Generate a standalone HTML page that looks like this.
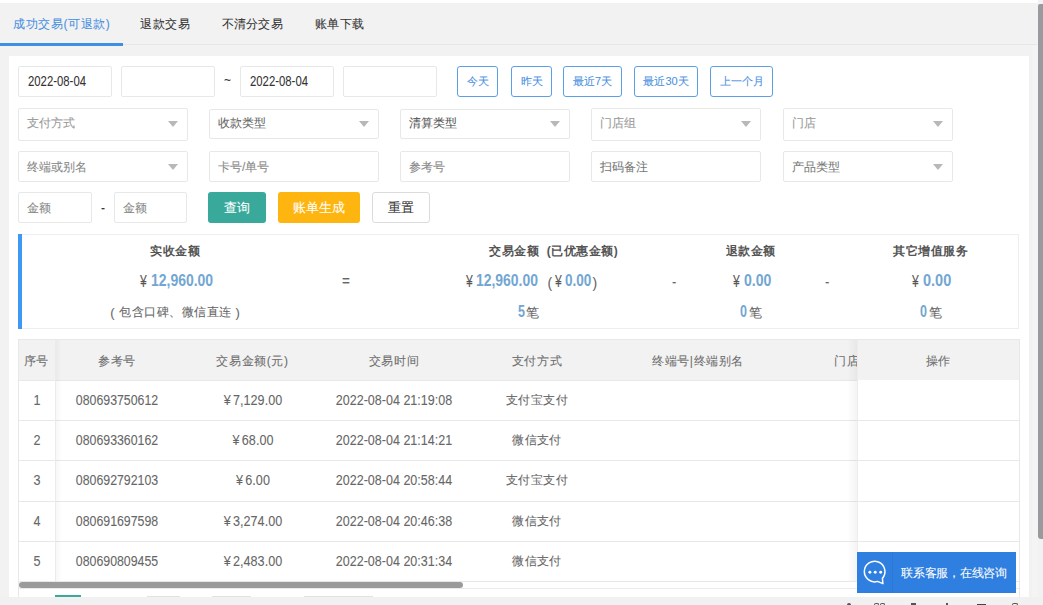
<!DOCTYPE html>
<html><head><meta charset="utf-8">
<style>
*{box-sizing:border-box;margin:0;padding:0}
html,body{width:1043px;height:605px;overflow:hidden;background:#f2f2f2;font-family:"Liberation Sans",sans-serif;color:#333;position:relative}
.a{position:absolute}
.t{white-space:nowrap;-webkit-text-stroke:0.08px}
.b{-webkit-text-stroke:0}
</style></head><body>
<div class="a" style="left:0px;top:0px;width:1038px;height:3px;background:#fff"></div>
<div class="a" style="left:0px;top:44px;width:1037px;height:1px;background:#e6e6e6"></div>
<div class="a t" style="left:13px;top:15.8px;line-height:16px;font-size:12px;color:#4a90e2;font-weight:normal;letter-spacing:0.6px;">成功交易(可退款)</div>
<div class="a t" style="left:140px;top:15.8px;line-height:16px;font-size:12px;color:#333;font-weight:normal;letter-spacing:0.5px;">退款交易</div>
<div class="a t" style="left:221.5px;top:15.8px;line-height:16px;font-size:12px;color:#333;font-weight:normal;letter-spacing:0.3px;">不清分交易</div>
<div class="a t" style="left:314.5px;top:15.8px;line-height:16px;font-size:12px;color:#333;font-weight:normal;letter-spacing:0.5px;">账单下载</div>
<div class="a" style="left:0px;top:43.3px;width:122.5px;height:2.4000000000000057px;background:#3c8fe3"></div>
<div class="a" style="left:9px;top:56px;width:1020px;height:541px;background:#fff"></div>
<div class="a" style="left:1032px;top:45px;width:6px;height:552px;background:#f4f4f4"></div>
<div class="a" style="left:1038px;top:4px;width:5px;height:534.5px;background:#999a9d;border-radius:2px 0 0 3px"></div>
<div class="a" style="left:0px;top:597px;width:1043px;height:8px;background:#f1f1f1"></div>
<div class="a" style="left:18px;top:66px;width:94px;height:31px;border:1px solid #e8e8e8;border-radius:2px;background:#fff"></div>
<div class="a t" style="left:28px;top:72.0px;line-height:18px;font-size:14px;color:#333;font-weight:normal;letter-spacing:0px;transform:scale(0.81,1);transform-origin:0 50%;">2022-08-04</div>
<div class="a" style="left:121px;top:66px;width:94px;height:31px;border:1px solid #e8e8e8;border-radius:2px;background:#fff"></div>
<div class="a t" style="left:224px;top:71.5px;line-height:16px;font-size:12px;color:#333;font-weight:normal;letter-spacing:0px;">~</div>
<div class="a" style="left:240px;top:66px;width:94px;height:31px;border:1px solid #e8e8e8;border-radius:2px;background:#fff"></div>
<div class="a t" style="left:250px;top:72.0px;line-height:18px;font-size:14px;color:#333;font-weight:normal;letter-spacing:0px;transform:scale(0.81,1);transform-origin:0 50%;">2022-08-04</div>
<div class="a" style="left:343px;top:66px;width:94px;height:31px;border:1px solid #e8e8e8;border-radius:2px;background:#fff"></div>
<div class="a" style="left:457px;top:66px;width:41px;height:31px;border:1px solid #5b9fe6;border-radius:3px;background:#fff"></div>
<div class="a t" style="left:177.5px;width:600px;text-align:center;top:74.0px;line-height:15px;font-size:11px;color:#4a90e2;font-weight:normal;letter-spacing:0px;">今天</div>
<div class="a" style="left:511px;top:66px;width:41px;height:31px;border:1px solid #5b9fe6;border-radius:3px;background:#fff"></div>
<div class="a t" style="left:231.5px;width:600px;text-align:center;top:74.0px;line-height:15px;font-size:11px;color:#4a90e2;font-weight:normal;letter-spacing:0px;">昨天</div>
<div class="a" style="left:563px;top:66px;width:59px;height:31px;border:1px solid #5b9fe6;border-radius:3px;background:#fff"></div>
<div class="a t" style="left:292.5px;width:600px;text-align:center;top:74.0px;line-height:15px;font-size:11px;color:#4a90e2;font-weight:normal;letter-spacing:0px;">最近7天</div>
<div class="a" style="left:634px;top:66px;width:64px;height:31px;border:1px solid #5b9fe6;border-radius:3px;background:#fff"></div>
<div class="a t" style="left:366.0px;width:600px;text-align:center;top:74.0px;line-height:15px;font-size:11px;color:#4a90e2;font-weight:normal;letter-spacing:0px;">最近30天</div>
<div class="a" style="left:710px;top:66px;width:63px;height:31px;border:1px solid #5b9fe6;border-radius:3px;background:#fff"></div>
<div class="a t" style="left:441.5px;width:600px;text-align:center;top:74.0px;line-height:15px;font-size:11px;color:#4a90e2;font-weight:normal;letter-spacing:0px;">上一个月</div>
<div class="a" style="left:18px;top:107.5px;width:170px;height:33.0px;border:1px solid #e8e8e8;border-radius:2px;background:#fff"></div>
<div class="a t" style="left:27px;top:115.2px;line-height:16px;font-size:12px;color:#999;font-weight:normal;letter-spacing:0px;">支付方式</div>
<div class="a" style="left:167.6px;top:121.0px;width:0;height:0;border-left:5px solid transparent;border-right:5px solid transparent;border-top:6px solid #b8b8b8"></div>
<div class="a" style="left:209px;top:108.5px;width:170px;height:30.5px;border:1px solid #e8e8e8;border-radius:2px;background:#fff"></div>
<div class="a t" style="left:218px;top:114.95px;line-height:16px;font-size:12px;color:#666;font-weight:normal;letter-spacing:0px;">收款类型</div>
<div class="a" style="left:358.6px;top:120.75px;width:0;height:0;border-left:5px solid transparent;border-right:5px solid transparent;border-top:6px solid #b8b8b8"></div>
<div class="a" style="left:400px;top:108.5px;width:170px;height:30.5px;border:1px solid #e8e8e8;border-radius:2px;background:#fff"></div>
<div class="a t" style="left:409px;top:114.95px;line-height:16px;font-size:12px;color:#555;font-weight:normal;letter-spacing:0px;">清算类型</div>
<div class="a" style="left:549.6px;top:120.75px;width:0;height:0;border-left:5px solid transparent;border-right:5px solid transparent;border-top:6px solid #b8b8b8"></div>
<div class="a" style="left:591px;top:108px;width:170px;height:32.5px;border:1px solid #e8e8e8;border-radius:2px;background:#fff"></div>
<div class="a t" style="left:600px;top:115.45px;line-height:16px;font-size:12px;color:#999;font-weight:normal;letter-spacing:0px;">门店组</div>
<div class="a" style="left:740.6px;top:121.25px;width:0;height:0;border-left:5px solid transparent;border-right:5px solid transparent;border-top:6px solid #b8b8b8"></div>
<div class="a" style="left:783px;top:108px;width:170px;height:32.5px;border:1px solid #e8e8e8;border-radius:2px;background:#fff"></div>
<div class="a t" style="left:792px;top:115.45px;line-height:16px;font-size:12px;color:#999;font-weight:normal;letter-spacing:0px;">门店</div>
<div class="a" style="left:932.6px;top:121.25px;width:0;height:0;border-left:5px solid transparent;border-right:5px solid transparent;border-top:6px solid #b8b8b8"></div>
<div class="a" style="left:18px;top:151px;width:170px;height:31px;border:1px solid #e8e8e8;border-radius:2px;background:#fff"></div>
<div class="a t" style="left:27px;top:158.5px;line-height:16px;font-size:12px;color:#888;font-weight:normal;letter-spacing:0px;">终端或别名</div>
<div class="a" style="left:167.6px;top:163.5px;width:0;height:0;border-left:5px solid transparent;border-right:5px solid transparent;border-top:6px solid #b8b8b8"></div>
<div class="a" style="left:209px;top:151px;width:170px;height:31px;border:1px solid #e8e8e8;border-radius:2px;background:#fff"></div>
<div class="a t" style="left:218px;top:158.5px;line-height:16px;font-size:12px;color:#888;font-weight:normal;letter-spacing:0px;">卡号/单号</div>
<div class="a" style="left:400px;top:151px;width:170px;height:31px;border:1px solid #e8e8e8;border-radius:2px;background:#fff"></div>
<div class="a t" style="left:409px;top:158.5px;line-height:16px;font-size:12px;color:#888;font-weight:normal;letter-spacing:0px;">参考号</div>
<div class="a" style="left:591px;top:151px;width:170px;height:31px;border:1px solid #e8e8e8;border-radius:2px;background:#fff"></div>
<div class="a t" style="left:600px;top:158.5px;line-height:16px;font-size:12px;color:#777;font-weight:normal;letter-spacing:0px;">扫码备注</div>
<div class="a" style="left:783px;top:151px;width:170px;height:31px;border:1px solid #e8e8e8;border-radius:2px;background:#fff"></div>
<div class="a t" style="left:792px;top:158.5px;line-height:16px;font-size:12px;color:#777;font-weight:normal;letter-spacing:0px;">产品类型</div>
<div class="a" style="left:932.6px;top:163.5px;width:0;height:0;border-left:5px solid transparent;border-right:5px solid transparent;border-top:6px solid #b8b8b8"></div>
<div class="a" style="left:18px;top:192px;width:74px;height:31px;border:1px solid #e8e8e8;border-radius:2px;background:#fff"></div>
<div class="a t" style="left:27px;top:199.5px;line-height:16px;font-size:12px;color:#888;font-weight:normal;letter-spacing:0px;">金额</div>
<div class="a t" style="left:101px;top:199.5px;line-height:16px;font-size:12px;color:#333;font-weight:normal;letter-spacing:0px;">-</div>
<div class="a" style="left:114px;top:192px;width:73px;height:31px;border:1px solid #e8e8e8;border-radius:2px;background:#fff"></div>
<div class="a t" style="left:123px;top:199.5px;line-height:16px;font-size:12px;color:#888;font-weight:normal;letter-spacing:0px;">金额</div>
<div class="a" style="left:208px;top:192px;width:58px;height:31px;background:#38a99b;border-radius:3px"></div>
<div class="a t" style="left:-63px;width:600px;text-align:center;top:200.25px;line-height:16.5px;font-size:12.5px;color:#fff;font-weight:normal;letter-spacing:0px;">查询</div>
<div class="a" style="left:278px;top:192px;width:82px;height:31px;background:#ffb50f;border-radius:3px"></div>
<div class="a t" style="left:19px;width:600px;text-align:center;top:200.25px;line-height:16.5px;font-size:12.5px;color:#fff;font-weight:normal;letter-spacing:0px;">账单生成</div>
<div class="a" style="left:372px;top:192px;width:58px;height:31px;border:1px solid #dcdcdc;border-radius:3px;background:#fff"></div>
<div class="a t" style="left:101px;width:600px;text-align:center;top:200.25px;line-height:16.5px;font-size:12.5px;color:#333;font-weight:normal;letter-spacing:0px;">重置</div>
<div class="a" style="left:18px;top:234px;width:1001px;height:95px;border:1px solid #eee;border-left:none;background:#fff"></div>
<div class="a" style="left:18px;top:234px;width:4px;height:95px;background:#3f97f6"></div>
<div class="a t b" style="left:-125px;width:600px;text-align:center;top:242.5px;line-height:16px;font-size:12px;color:#555;font-weight:bold;letter-spacing:0.5px;">实收金额</div>
<div class="a t" style="left:139.79999999999998px;top:271.5px;line-height:20px;font-size:16px;color:#555;font-weight:normal;letter-spacing:0px;transform:scale(0.76,1);transform-origin:0 50%;">¥</div>
<div class="a t b" style="left:150.6px;top:271.0px;line-height:20px;font-size:16px;color:#72a6d2;font-weight:bold;letter-spacing:0px;transform:scale(0.872,1);transform-origin:0 50%;">12,960.00</div>
<div class="a t" style="left:110.3px;top:304.0px;line-height:17px;font-size:13px;color:#666;font-weight:normal;letter-spacing:0px;">(</div>
<div class="a t" style="left:119px;top:304.0px;line-height:16px;font-size:12px;color:#666;font-weight:normal;letter-spacing:0.5px;">包含口碑、微信直连</div>
<div class="a t" style="left:235.5px;top:304.0px;line-height:17px;font-size:13px;color:#666;font-weight:normal;letter-spacing:0px;">)</div>
<div class="a t" style="left:341.5px;top:270.5px;line-height:19px;font-size:15px;color:#666;font-weight:normal;letter-spacing:0px;transform:scale(0.9,1);transform-origin:0 50%;">=</div>
<div class="a t b" style="left:489px;top:242.5px;line-height:16px;font-size:12px;color:#555;font-weight:bold;letter-spacing:0.5px;">交易金额&nbsp;&nbsp;(已优惠金额)</div>
<div class="a t" style="left:465.59999999999997px;top:271.5px;line-height:20px;font-size:16px;color:#555;font-weight:normal;letter-spacing:0px;transform:scale(0.76,1);transform-origin:0 50%;">¥</div>
<div class="a t b" style="left:476.1px;top:271.0px;line-height:20px;font-size:16px;color:#72a6d2;font-weight:bold;letter-spacing:0px;transform:scale(0.87,1);transform-origin:0 50%;">12,960.00</div>
<div class="a t" style="left:547.5px;top:273.5px;line-height:18px;font-size:14px;color:#666;font-weight:normal;letter-spacing:0px;">(</div>
<div class="a t" style="left:554.8000000000001px;top:271.5px;line-height:20px;font-size:16px;color:#555;font-weight:normal;letter-spacing:0px;transform:scale(0.76,1);transform-origin:0 50%;">¥</div>
<div class="a t b" style="left:564.7px;top:271.0px;line-height:20px;font-size:16px;color:#72a6d2;font-weight:bold;letter-spacing:0px;transform:scale(0.845,1);transform-origin:0 50%;">0.00</div>
<div class="a t" style="left:592.5px;top:273.5px;line-height:18px;font-size:14px;color:#666;font-weight:normal;letter-spacing:0px;">)</div>
<div class="a t b" style="left:518.3px;top:301.5px;line-height:20px;font-size:16px;color:#72a6d2;font-weight:bold;letter-spacing:0px;transform:scale(0.78,1);transform-origin:0 50%;">5</div>
<div class="a t" style="left:526.3px;top:304.0px;line-height:17px;font-size:13px;color:#666;font-weight:normal;letter-spacing:0px;">笔</div>
<div class="a t" style="left:672px;top:272.5px;line-height:17px;font-size:13px;color:#666;font-weight:normal;letter-spacing:0px;">-</div>
<div class="a t b" style="left:450.5px;width:600px;text-align:center;top:242.5px;line-height:16px;font-size:12px;color:#555;font-weight:bold;letter-spacing:0.5px;">退款金额</div>
<div class="a t" style="left:733.2px;top:271.5px;line-height:20px;font-size:16px;color:#555;font-weight:normal;letter-spacing:0px;transform:scale(0.76,1);transform-origin:0 50%;">¥</div>
<div class="a t b" style="left:743.5px;top:271.0px;line-height:20px;font-size:16px;color:#72a6d2;font-weight:bold;letter-spacing:0px;transform:scale(0.877,1);transform-origin:0 50%;">0.00</div>
<div class="a t b" style="left:740px;top:301.5px;line-height:20px;font-size:16px;color:#72a6d2;font-weight:bold;letter-spacing:0px;transform:scale(0.78,1);transform-origin:0 50%;">0</div>
<div class="a t" style="left:748.5px;top:304.0px;line-height:17px;font-size:13px;color:#666;font-weight:normal;letter-spacing:0px;">笔</div>
<div class="a t" style="left:825px;top:272.5px;line-height:17px;font-size:13px;color:#666;font-weight:normal;letter-spacing:0px;">-</div>
<div class="a t b" style="left:630.5px;width:600px;text-align:center;top:242.5px;line-height:16px;font-size:12px;color:#555;font-weight:bold;letter-spacing:0.5px;">其它增值服务</div>
<div class="a t" style="left:912.2px;top:271.5px;line-height:20px;font-size:16px;color:#555;font-weight:normal;letter-spacing:0px;transform:scale(0.76,1);transform-origin:0 50%;">¥</div>
<div class="a t b" style="left:922.5px;top:271.0px;line-height:20px;font-size:16px;color:#72a6d2;font-weight:bold;letter-spacing:0px;transform:scale(0.906,1);transform-origin:0 50%;">0.00</div>
<div class="a t b" style="left:919.7px;top:301.5px;line-height:20px;font-size:16px;color:#72a6d2;font-weight:bold;letter-spacing:0px;transform:scale(0.78,1);transform-origin:0 50%;">0</div>
<div class="a t" style="left:928.5px;top:304.0px;line-height:17px;font-size:13px;color:#666;font-weight:normal;letter-spacing:0px;">笔</div>
<div class="a" style="left:18px;top:339px;width:1002px;height:258px;border:1px solid #e8e8e8;border-bottom:none;background:#fff"></div>
<div class="a" style="left:19px;top:340px;width:1000px;height:40px;background:#f2f2f2"></div>
<div class="a t" style="left:-263.5px;width:600px;text-align:center;top:352.5px;line-height:16px;font-size:12px;color:#6e6e6e;font-weight:normal;letter-spacing:0.6px;">序号</div>
<div class="a t" style="left:-183px;width:600px;text-align:center;top:352.5px;line-height:16px;font-size:12px;color:#6e6e6e;font-weight:normal;letter-spacing:0.6px;">参考号</div>
<div class="a t" style="left:-47.5px;width:600px;text-align:center;top:352.5px;line-height:16px;font-size:12px;color:#6e6e6e;font-weight:normal;letter-spacing:0.6px;">交易金额(元)</div>
<div class="a t" style="left:94px;width:600px;text-align:center;top:352.5px;line-height:16px;font-size:12px;color:#6e6e6e;font-weight:normal;letter-spacing:0.6px;">交易时间</div>
<div class="a t" style="left:237px;width:600px;text-align:center;top:352.5px;line-height:16px;font-size:12px;color:#6e6e6e;font-weight:normal;letter-spacing:0.6px;">支付方式</div>
<div class="a t" style="left:398px;width:600px;text-align:center;top:352.5px;line-height:16px;font-size:12px;color:#6e6e6e;font-weight:normal;letter-spacing:0.6px;">终端号|终端别名</div>
<div class="a t" style="left:834px;top:352.5px;line-height:16px;font-size:12px;color:#6e6e6e;font-weight:normal;letter-spacing:0.6px;">门店</div>
<div class="a" style="left:19px;top:380px;width:1000px;height:1px;background:#e8e8e8"></div>
<div class="a t" style="left:-263.5px;width:600px;text-align:center;top:390.5px;line-height:18px;font-size:14px;color:#666;font-weight:normal;letter-spacing:0px;transform:scale(0.9,1);transform-origin:50% 50%;">1</div>
<div class="a t" style="left:-183px;width:600px;text-align:center;top:390.5px;line-height:18px;font-size:14px;color:#666;font-weight:normal;letter-spacing:0px;transform:scale(0.882,1);transform-origin:50% 50%;">080693750612</div>
<div class="a t" style="left:-47.5px;width:600px;text-align:center;top:390.5px;line-height:18px;font-size:14px;color:#666;font-weight:normal;letter-spacing:0px;transform:scale(0.9,1);transform-origin:50% 50%;">¥<span style="margin-left:2.5px">7,129.00</span></div>
<div class="a t" style="left:94px;width:600px;text-align:center;top:390.5px;line-height:18px;font-size:14px;color:#666;font-weight:normal;letter-spacing:0px;transform:scale(0.895,1);transform-origin:50% 50%;">2022-08-04 21:19:08</div>
<div class="a t" style="left:237px;width:600px;text-align:center;top:391.5px;line-height:16px;font-size:12px;color:#666;font-weight:normal;letter-spacing:0.4px;">支付宝支付</div>
<div class="a" style="left:19px;top:420px;width:1000px;height:1px;background:#e8e8e8"></div>
<div class="a t" style="left:-263.5px;width:600px;text-align:center;top:430.5px;line-height:18px;font-size:14px;color:#666;font-weight:normal;letter-spacing:0px;transform:scale(0.9,1);transform-origin:50% 50%;">2</div>
<div class="a t" style="left:-183px;width:600px;text-align:center;top:430.5px;line-height:18px;font-size:14px;color:#666;font-weight:normal;letter-spacing:0px;transform:scale(0.882,1);transform-origin:50% 50%;">080693360162</div>
<div class="a t" style="left:-47.5px;width:600px;text-align:center;top:430.5px;line-height:18px;font-size:14px;color:#666;font-weight:normal;letter-spacing:0px;transform:scale(0.9,1);transform-origin:50% 50%;">¥<span style="margin-left:2.5px">68.00</span></div>
<div class="a t" style="left:94px;width:600px;text-align:center;top:430.5px;line-height:18px;font-size:14px;color:#666;font-weight:normal;letter-spacing:0px;transform:scale(0.895,1);transform-origin:50% 50%;">2022-08-04 21:14:21</div>
<div class="a t" style="left:237px;width:600px;text-align:center;top:431.5px;line-height:16px;font-size:12px;color:#666;font-weight:normal;letter-spacing:0.4px;">微信支付</div>
<div class="a" style="left:19px;top:460px;width:1000px;height:1px;background:#e8e8e8"></div>
<div class="a t" style="left:-263.5px;width:600px;text-align:center;top:471.0px;line-height:18px;font-size:14px;color:#666;font-weight:normal;letter-spacing:0px;transform:scale(0.9,1);transform-origin:50% 50%;">3</div>
<div class="a t" style="left:-183px;width:600px;text-align:center;top:471.0px;line-height:18px;font-size:14px;color:#666;font-weight:normal;letter-spacing:0px;transform:scale(0.882,1);transform-origin:50% 50%;">080692792103</div>
<div class="a t" style="left:-47.5px;width:600px;text-align:center;top:471.0px;line-height:18px;font-size:14px;color:#666;font-weight:normal;letter-spacing:0px;transform:scale(0.9,1);transform-origin:50% 50%;">¥<span style="margin-left:2.5px">6.00</span></div>
<div class="a t" style="left:94px;width:600px;text-align:center;top:471.0px;line-height:18px;font-size:14px;color:#666;font-weight:normal;letter-spacing:0px;transform:scale(0.895,1);transform-origin:50% 50%;">2022-08-04 20:58:44</div>
<div class="a t" style="left:237px;width:600px;text-align:center;top:472.0px;line-height:16px;font-size:12px;color:#666;font-weight:normal;letter-spacing:0.4px;">支付宝支付</div>
<div class="a" style="left:19px;top:501px;width:1000px;height:1px;background:#e8e8e8"></div>
<div class="a t" style="left:-263.5px;width:600px;text-align:center;top:511.5px;line-height:18px;font-size:14px;color:#666;font-weight:normal;letter-spacing:0px;transform:scale(0.9,1);transform-origin:50% 50%;">4</div>
<div class="a t" style="left:-183px;width:600px;text-align:center;top:511.5px;line-height:18px;font-size:14px;color:#666;font-weight:normal;letter-spacing:0px;transform:scale(0.882,1);transform-origin:50% 50%;">080691697598</div>
<div class="a t" style="left:-47.5px;width:600px;text-align:center;top:511.5px;line-height:18px;font-size:14px;color:#666;font-weight:normal;letter-spacing:0px;transform:scale(0.9,1);transform-origin:50% 50%;">¥<span style="margin-left:2.5px">3,274.00</span></div>
<div class="a t" style="left:94px;width:600px;text-align:center;top:511.5px;line-height:18px;font-size:14px;color:#666;font-weight:normal;letter-spacing:0px;transform:scale(0.895,1);transform-origin:50% 50%;">2022-08-04 20:46:38</div>
<div class="a t" style="left:237px;width:600px;text-align:center;top:512.5px;line-height:16px;font-size:12px;color:#666;font-weight:normal;letter-spacing:0.4px;">微信支付</div>
<div class="a" style="left:19px;top:541px;width:1000px;height:1px;background:#e8e8e8"></div>
<div class="a t" style="left:-263.5px;width:600px;text-align:center;top:551.5px;line-height:18px;font-size:14px;color:#666;font-weight:normal;letter-spacing:0px;transform:scale(0.9,1);transform-origin:50% 50%;">5</div>
<div class="a t" style="left:-183px;width:600px;text-align:center;top:551.5px;line-height:18px;font-size:14px;color:#666;font-weight:normal;letter-spacing:0px;transform:scale(0.882,1);transform-origin:50% 50%;">080690809455</div>
<div class="a t" style="left:-47.5px;width:600px;text-align:center;top:551.5px;line-height:18px;font-size:14px;color:#666;font-weight:normal;letter-spacing:0px;transform:scale(0.9,1);transform-origin:50% 50%;">¥<span style="margin-left:2.5px">2,483.00</span></div>
<div class="a t" style="left:94px;width:600px;text-align:center;top:551.5px;line-height:18px;font-size:14px;color:#666;font-weight:normal;letter-spacing:0px;transform:scale(0.895,1);transform-origin:50% 50%;">2022-08-04 20:31:34</div>
<div class="a t" style="left:237px;width:600px;text-align:center;top:552.5px;line-height:16px;font-size:12px;color:#666;font-weight:normal;letter-spacing:0.4px;">微信支付</div>
<div class="a" style="left:19px;top:581px;width:1000px;height:1px;background:#e8e8e8"></div>
<div class="a" style="left:55px;top:340px;width:1px;height:241px;background:#ebebeb"></div>
<div class="a" style="left:56px;top:340px;width:6px;height:241px;background:linear-gradient(to right,rgba(0,0,0,0.03),rgba(0,0,0,0))"></div>
<div class="a" style="left:847px;top:340px;width:10px;height:241px;background:linear-gradient(to left,rgba(0,0,0,0.045),rgba(0,0,0,0))"></div>
<div class="a" style="left:857px;top:340px;width:162px;height:40px;background:#f2f2f2"></div>
<div class="a" style="left:857px;top:380px;width:162px;height:201px;background:#fff"></div>
<div class="a" style="left:857px;top:420px;width:162px;height:1px;background:#e8e8e8"></div>
<div class="a" style="left:857px;top:460px;width:162px;height:1px;background:#e8e8e8"></div>
<div class="a" style="left:857px;top:501px;width:162px;height:1px;background:#e8e8e8"></div>
<div class="a" style="left:857px;top:541px;width:162px;height:1px;background:#e8e8e8"></div>
<div class="a" style="left:857px;top:581px;width:162px;height:1px;background:#e8e8e8"></div>
<div class="a" style="left:857px;top:340px;width:1px;height:241px;background:#ececec"></div>
<div class="a t" style="left:638.5px;width:600px;text-align:center;top:352.5px;line-height:16px;font-size:12px;color:#6e6e6e;font-weight:normal;letter-spacing:0.6px;">操作</div>
<div class="a" style="left:19px;top:588px;width:1000px;height:1px;background:#ececec"></div>
<div class="a" style="left:19px;top:582px;width:444px;height:5.5px;background:#9b9b9b;border-radius:3px"></div>
<div class="a" style="left:55px;top:595px;width:26px;height:2px;background:#3aa99b"></div>
<div class="a" style="left:147px;top:596px;width:33px;height:1px;background:#e2e2e2"></div>
<div class="a" style="left:212px;top:596px;width:39px;height:1px;background:#e2e2e2"></div>
<div class="a" style="left:304px;top:596px;width:69px;height:1px;background:#e2e2e2"></div>
<div class="a" style="left:847px;top:603px;width:4px;height:2px;background:#555;border-radius:2px 2px 0 0"></div>
<div class="a" style="left:874px;top:603px;width:5px;height:2px;border:1.5px solid #555;border-bottom:none;border-radius:3px 3px 0 0"></div>
<div class="a" style="left:880px;top:603px;width:5px;height:2px;border:1.5px solid #555;border-bottom:none;border-radius:3px 3px 0 0"></div>
<div class="a" style="left:911px;top:603px;width:5px;height:1.5px;background:#555"></div>
<div class="a" style="left:946px;top:603px;width:2px;height:2px;background:#555"></div>
<div class="a" style="left:977px;top:603.5px;width:9px;height:1.5px;background:#444"></div>
<div class="a" style="left:1012px;top:603px;width:6px;height:2px;border:1.5px solid #555;border-bottom:none;border-radius:3px 3px 0 0"></div>
<div class="a" style="left:857px;top:552px;width:159px;height:41px;background:#2f7fe0"></div>
<div class="a" style="left:892px;top:552px;width:1px;height:41px;background:#2b77d8"></div>
<svg class="a" style="left:862px;top:559px" width="26" height="27" viewBox="0 0 26 27"><path d="M20.4 19.3A10.3 10.3 0 1 0 15.6 22.4L20.9 24.6Z" fill="none" stroke="#fff" stroke-width="1.5" stroke-linejoin="round"/><circle cx="7.9" cy="13.2" r="1.45" fill="#fff"/><circle cx="13.2" cy="13.2" r="1.45" fill="#fff"/><circle cx="18.7" cy="13.2" r="1.45" fill="#fff"/></svg>
<div class="a t" style="left:901px;top:565.0px;line-height:16px;font-size:12px;color:#fff;font-weight:normal;letter-spacing:-0.25px;">联系客服，在线咨询</div>
</body></html>
